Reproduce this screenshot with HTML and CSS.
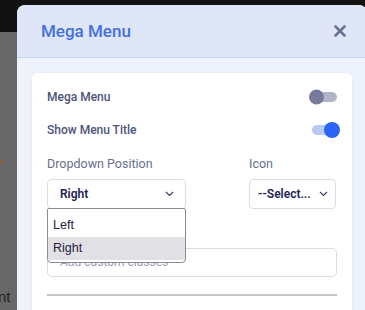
FILE: index.html
```html
<!DOCTYPE html>
<html>
<head>
<meta charset="utf-8">
<link rel="stylesheet" href="styles.css">
</head>
<body>
<div class="page">
  <div class="topbar"></div>
  <div class="backdrop">
    <span class="dot"></span>
    <span class="trail">nt</span>
  </div>
</div>
<div class="modal">
  <div class="modal-header">
    <h2 class="modal-title">Mega Menu</h2>
    <svg class="close" width="12" height="12" viewBox="0 0 12 12"><path d="M1.5 1.5 L10.5 10.5 M10.5 1.5 L1.5 10.5" stroke="#6c7193" stroke-width="2.6" stroke-linecap="round"/></svg>
  </div>
  <div class="modal-body">
    <div class="card">
      <div class="row">
        <span class="label">Mega Menu</span>
        <span class="toggle off"><span class="knob"></span></span>
      </div>
      <div class="row">
        <span class="label">Show Menu Title</span>
        <span class="toggle on"><span class="knob"></span></span>
      </div>
      <div class="fields">
        <div class="field">
          <div class="sublabel">Dropdown Position</div>
          <div class="select wide">
            <span class="value">Right</span>
            <svg class="chev" width="9" height="6" viewBox="0 0 9 6"><path d="M1 1 L4.5 4.5 L8 1" fill="none" stroke="#3a4160" stroke-width="1.2"/></svg>
            <div class="popup">
              <div class="opt">Left</div>
              <div class="opt active">Right</div>
            </div>
          </div>
        </div>
        <div class="field">
          <div class="sublabel">Icon</div>
          <div class="select narrow">
            <span class="value">--Select...</span>
            <svg class="chev" width="9" height="6" viewBox="0 0 9 6"><path d="M1 1 L4.5 4.5 L8 1" fill="none" stroke="#3a4160" stroke-width="1.2"/></svg>
          </div>
        </div>
      </div>
      <div class="sublabel classes">CSS Class</div>
      <div class="input">Add custom classes</div>
      <div class="rule"></div>
    </div>
  </div>
</div>
</body>
</html>
```
FILE: styles.css
```css
html, body {
  margin: 0;
  padding: 0;
  width: 365px;
  height: 310px;
  overflow: hidden;
  font-family: Roboto, "Noto Sans", sans-serif;
}
.page {
  display: flex;
  flex-direction: column;
  height: 310px;
}
.topbar {
  height: 32px;
  background: #121212;
}
.backdrop {
  flex: 1;
  background: #676767;
  position: relative;
}
.dot {
  position: absolute;
  left: 0;
  top: 129px;
  width: 2px;
  height: 2px;
  background: #9a5a1c;
}
.trail {
  position: absolute;
  left: -2px;
  top: 256px;
  font-family: "Liberation Sans", Arial, sans-serif;
  font-size: 15px;
  color: #1e1e1e;
}
.modal {
  position: absolute;
  left: 17px;
  top: 5px;
  width: 350px;
  height: 305px;
  overflow: hidden;
  background: #eef2fb;
  border-radius: 8px 8px 0 0;
}
.modal-header {
  height: 52px;
  background: #dfe6f8;
  border-bottom: 1px solid #c6d4f1;
  border-radius: 8px 8px 0 0;
  display: flex;
  align-items: center;
  justify-content: space-between;
  padding: 0 20px 0 24px;
}
.modal-title {
  margin: 0;
  font-size: 17px;
  font-weight: 500;
  color: #4270e2;
}
.close {
  display: block;
  margin-right: 1px;
}
.modal-body {
  padding: 15px 15px 0;
}
.card {
  background: #fff;
  border-radius: 5px;
  padding: 7px 15px 0;
  height: 260px;
  box-shadow: 0 0 2px rgba(120, 140, 190, 0.12);
}
.row {
  display: flex;
  align-items: center;
  justify-content: space-between;
  height: 33px;
}
.label {
  font-size: 12px;
  font-weight: 500;
  color: #4b5478;
}
.toggle {
  position: relative;
  width: 27px;
  height: 10px;
  border-radius: 5px;
}
.toggle .knob {
  position: absolute;
  top: 50%;
  border-radius: 50%;
  transform: translateY(-50%);
}
.toggle.off {
  background: #b1b4c7;
}
.toggle.off .knob {
  left: -1px;
  width: 15px;
  height: 15px;
  background: #777a9a;
}
.toggle.on {
  background: #b9c9f6;
  margin-right: -2px;
}
.toggle.on .knob {
  right: -1px;
  width: 16px;
  height: 16px;
  background: #2c64f6;
}
.fields {
  display: grid;
  grid-template-columns: 139px 87px;
  column-gap: 63px;
  margin-top: 10px;
}
.sublabel {
  font-size: 12.5px;
  color: #66708d;
  height: 16px;
  line-height: 16px;
  margin-bottom: 7px;
}
.sublabel.classes {
  margin-top: 13px;
  margin-bottom: 10px;
}
.select {
  position: relative;
  height: 30px;
  box-sizing: border-box;
  border: 1px solid #dadde7;
  border-radius: 4px;
  display: flex;
  align-items: center;
  justify-content: space-between;
}
.select.wide {
  padding: 0 11px 0 12px;
}
.select.narrow {
  padding: 0 7px 0 8px;
}
.select .value {
  font-size: 12px;
  font-weight: 600;
  color: #1c2454;
}
.chev {
  display: block;
}
.popup {
  position: absolute;
  left: -1px;
  right: -1px;
  top: 28px;
  height: 55px;
  background: #fff;
  border: 1px solid #8c8c8c;
  border-radius: 2px 2px 4px 4px;
  box-sizing: border-box;
  padding-top: 5px;
  z-index: 2;
  font-family: "Liberation Sans", Arial, sans-serif;
}
.opt {
  height: 23px;
  line-height: 23px;
  padding-left: 5px;
  font-size: 12.5px;
  color: #2a1b40;
}
.opt.active {
  background: #e1e0e5;
}
.input {
  height: 29px;
  box-sizing: border-box;
  border: 1px solid #dadde7;
  border-radius: 5px;
  padding-left: 12px;
  font-size: 12px;
  line-height: 27px;
  color: #98a0b4;
}
.rule {
  margin-top: 17px;
  height: 2px;
  background: #c6c6c6;
}
```
